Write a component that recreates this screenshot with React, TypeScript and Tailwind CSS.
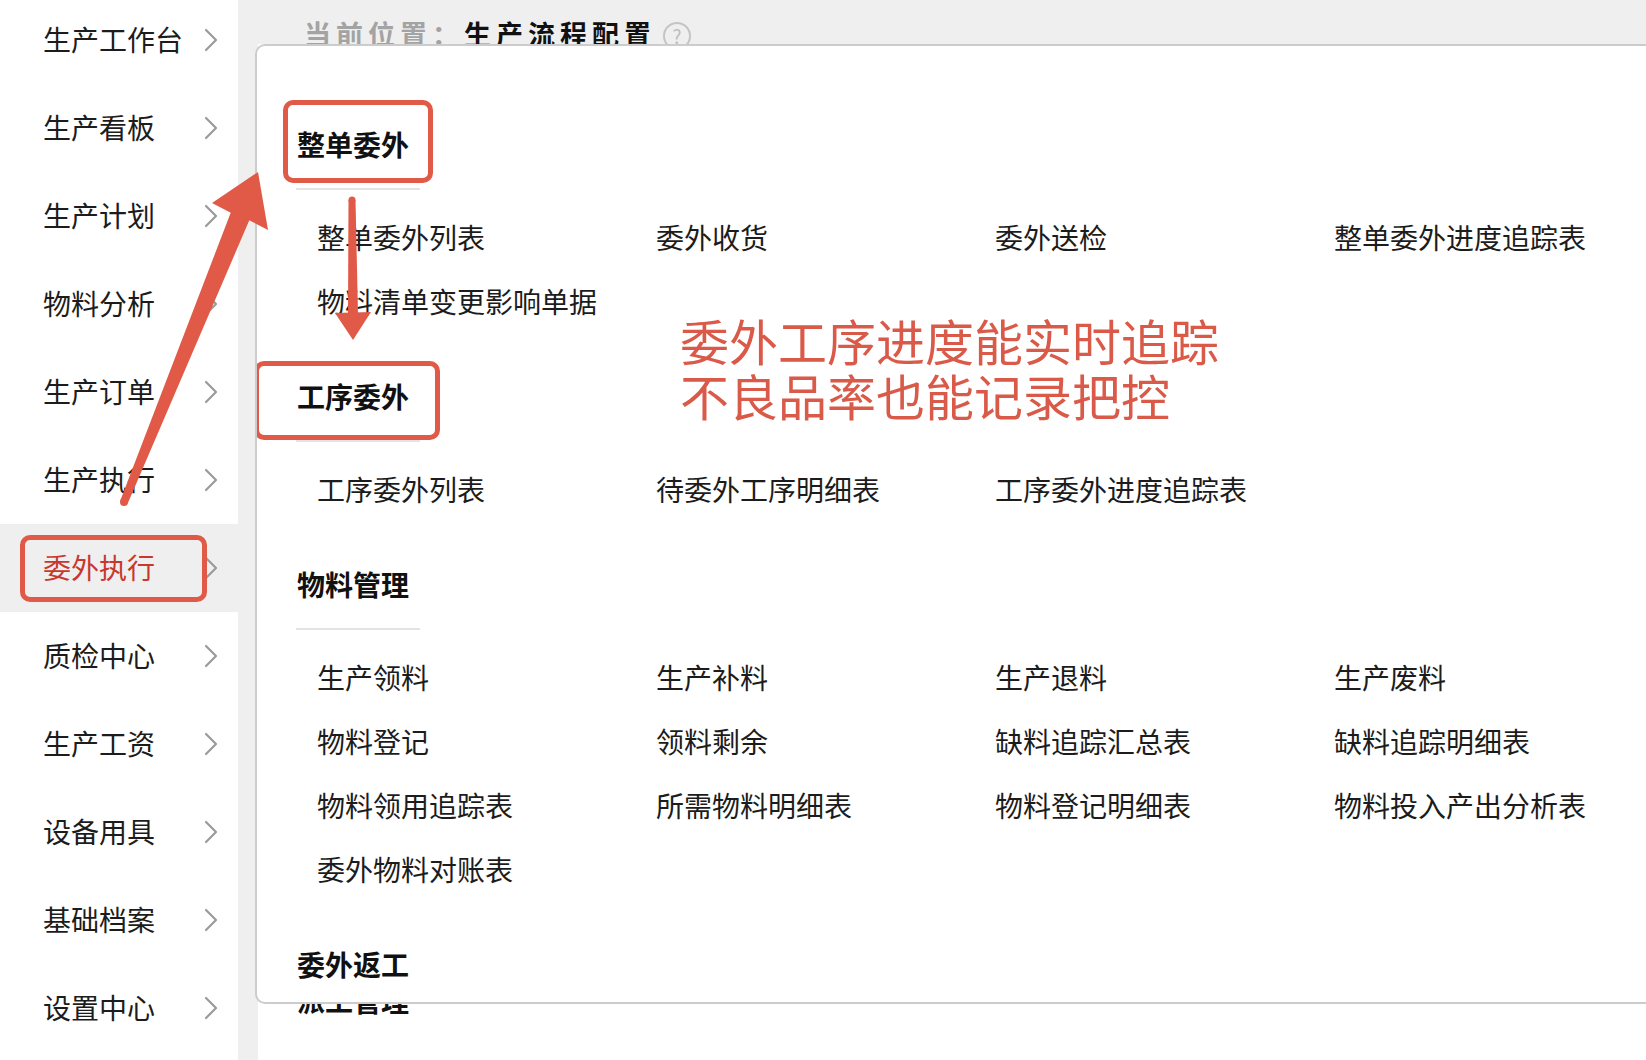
import React from "react";

const sideItems = [
  "生产工作台",
  "生产看板",
  "生产计划",
  "物料分析",
  "生产订单",
  "生产执行",
  "委外执行",
  "质检中心",
  "生产工资",
  "设备用具",
  "基础档案",
  "设置中心",
];

type Section = { title: string; rows: string[][]; box?: "a" | "b" };

const sections: Section[] = [
  {
    title: "整单委外",
    box: "a",
    rows: [["整单委外列表", "委外收货", "委外送检", "整单委外进度追踪表"], ["物料清单变更影响单据"]],
  },
  {
    title: "工序委外",
    box: "b",
    rows: [["工序委外列表", "待委外工序明细表", "工序委外进度追踪表"]],
  },
  {
    title: "物料管理",
    rows: [
      ["生产领料", "生产补料", "生产退料", "生产废料"],
      ["物料登记", "领料剩余", "缺料追踪汇总表", "缺料追踪明细表"],
      ["物料领用追踪表", "所需物料明细表", "物料登记明细表", "物料投入产出分析表"],
      ["委外物料对账表"],
    ],
  },
  { title: "委外返工", rows: [] },
];

function Chevron() {
  return (
    <svg width="14" height="24" viewBox="0 0 14 24" className="shrink-0">
      <polyline points="2,2 12,12 2,22" fill="none" stroke="#9a9a9a" strokeWidth="2.2" strokeLinecap="round" strokeLinejoin="round" />
    </svg>
  );
}

export default function App() {
  return (
    <div className="relative w-[1646px] h-[1060px] overflow-hidden flex bg-[#efefef] font-['Noto_Sans_CJK_SC',sans-serif] text-[#1c1c1c]">
      {/* Sidebar */}
      <aside className="w-[238px] h-full bg-white shrink-0">
        <div className="-mt-[4px] flex flex-col">
          {sideItems.map((name) => {
            const active = name === "委外执行";
            return (
              <div
                key={name}
                className={`relative h-[88px] flex items-center justify-between pl-[43px] pr-[20px] text-[28px] leading-[40px] ${
                  active ? "bg-[#efefef] text-[#c8392d]" : ""
                }`}
              >
                <span className="pb-[3px]">{name}</span>
                <Chevron />
                {active && (
                  <div className="absolute left-[20px] top-[11px] w-[187px] h-[67px] border-[5px] border-[#e05a47] rounded-[10px]" />
                )}
              </div>
            );
          })}
        </div>
      </aside>

      {/* Main */}
      <main className="flex-1 flex flex-col">
        <div className="h-[44px] shrink-0 pl-[66px] pt-[19px] flex items-start leading-[30px] text-[27px] font-bold tracking-[5px]">
          <span className="text-[#a3a3a3]">当前位置：</span>
          <span className="text-[#111]">生产流程配置</span>
          <span className="ml-[7px] mt-[3px] w-[28px] h-[28px] rounded-full border-2 border-[#c4c4c4] text-[#bdbdbd] text-[19px] leading-[24px] font-normal tracking-normal flex items-center justify-center">
            ?
          </span>
        </div>
        <div className="ml-[20px] flex-1 bg-white flex flex-col justify-end pb-[35px] pl-[39px]">
          <div className="text-[28px] leading-[50px] font-bold text-[#111]">派工管理</div>
        </div>
      </main>

      {/* Popup panel */}
      <div className="absolute left-[255px] top-[44px] w-[1401px] h-[960px] bg-white border-2 border-[#cccccc] rounded-l-[10px] z-10 overflow-hidden pt-[73px] pl-[40px]">
        {sections.map((s, i) => (
          <div key={s.title} className={i === 0 ? "" : "mt-[38px]"}>
            <div className="relative h-[50px] flex items-center text-[28px] font-bold text-[#111]">
              <span>{s.title}</span>
              {s.box === "a" && (
                <div className="absolute -left-[14px] -top-[19px] w-[150px] h-[83px] border-[5px] border-[#e05a47] rounded-[10px]" />
              )}
              {s.box === "b" && (
                <div className="absolute -left-[43px] -top-[10px] w-[186px] h-[79px] border-[5px] border-[#e05a47] rounded-[10px]" />
              )}
            </div>
            <div className="mt-[19px] -ml-[1px] w-[124px] h-[2px] bg-[#e3e3e3]" />
            {s.rows.length > 0 && (
              <div className="mt-[15px] ml-[20px] flex flex-col">
                {s.rows.map((row, ri) => (
                  <div key={ri} className="h-[64px] grid grid-cols-[339px_339px_339px_339px] items-center text-[28px] text-[#1c1c1c]">
                    {row.map((it) => (
                      <span key={it}>{it}</span>
                    ))}
                  </div>
                ))}
              </div>
            )}
          </div>
        ))}
      </div>

      {/* Annotation text */}
      <div className="absolute left-[680px] top-[315px] z-20 flex flex-col gap-[6px] text-[49px] leading-[49px] text-[#da5a49] whitespace-nowrap">
        <div>委外工序进度能实时追踪</div>
        <div>不良品率也能记录把控</div>
      </div>

      {/* Annotation arrows */}
      <svg className="absolute inset-0 z-20 pointer-events-none" width="1646" height="1060" viewBox="0 0 1646 1060">
        <g fill="#e05a47">
          <polygon points="120.3,500.5 230.7,212.7 212,203 258,172 268,230 249.3,220.3 127.7,503.5" />
          <circle cx="124" cy="502" r="4" />
          <polygon points="348.5,200 355.5,200 358,314 348,314" />
          <circle cx="352" cy="200" r="3.5" />
          <polygon points="335,313 371,312 353,340" />
        </g>
      </svg>
    </div>
  );
}
